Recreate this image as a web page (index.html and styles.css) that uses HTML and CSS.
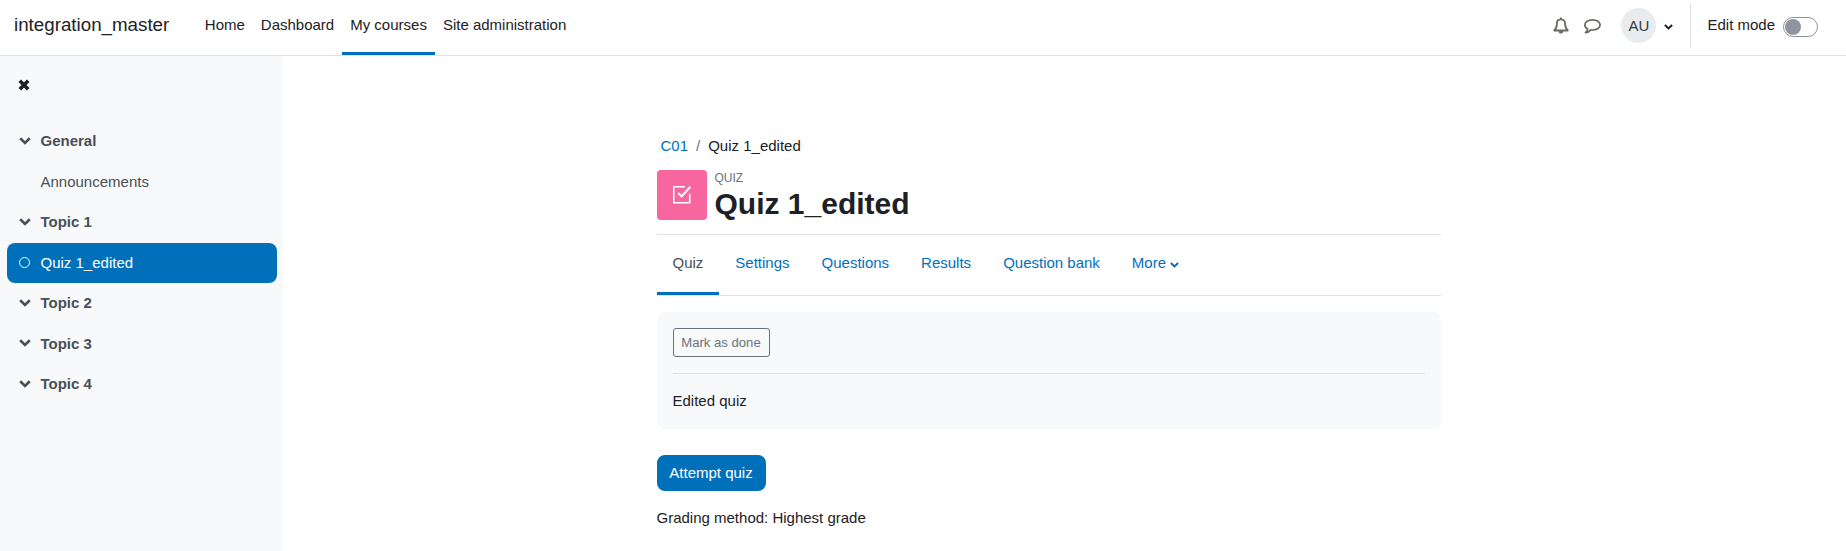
FILE: index.html
```html
<!DOCTYPE html>
<html lang="en">
<head>
    <meta charset="UTF-8">
    <meta name="viewport" content="width=device-width, initial-scale=1.0">
    <title>Quiz 1_edited</title>
    <link rel="stylesheet" href="styles.css">
</head>
<body>
    <!-- Shared icons -->
    <svg class="sprite" width="0" height="0">
        <symbol id="chevron" viewBox="0 0 12 8">
            <path d="M1.2 1.3 L6 5.9 L10.8 1.3" fill="none" stroke="currentColor" stroke-width="2.7"/>
        </symbol>
    </svg>

    <header class="navbar">
        <a class="brand" href="#">integration_master</a>
        <nav class="primary-nav">
            <a href="#">Home</a>
            <a href="#">Dashboard</a>
            <a class="active" href="#">My courses</a>
            <a href="#">Site administration</a>
        </nav>
        <div class="user-nav">
            <svg class="bell" viewBox="0 0 16 17" width="16" height="17">
                <path d="M8 2.3 C5.2 2.3 3.9 4.3 3.9 6.5 C3.9 10 2.9 12 1.2 13.5 H14.8 C13.1 12 12.1 10 12.1 6.5 C12.1 4.3 10.8 2.3 8 2.3 Z M8 0.4 V2.3" fill="none" stroke="currentColor" stroke-width="1.8" stroke-linejoin="round"/>
                <path d="M5.7 14 A2.3 2.6 0 0 0 10.3 14 Z" fill="currentColor"/>
            </svg>
            <svg class="chat" viewBox="0 0 17 15" width="17" height="15">
                <path d="M8.5 0.9 C4.2 0.9 0.9 3 0.9 5.9 C0.9 7.6 1.9 9 3.6 9.9 C3.4 11.4 2.7 12.6 1.5 13.6 C3.7 13.4 5.5 12.4 6.7 10.9 C7.3 11 7.9 11 8.5 11 C12.8 11 16.1 8.8 16.1 5.9 C16.1 3 12.8 0.9 8.5 0.9 Z" fill="none" stroke="currentColor" stroke-width="1.7" stroke-linejoin="round"/>
            </svg>
            <span class="avatar">AU</span>
            <svg class="caret" width="9" height="6"><use href="#chevron"/></svg>
        </div>
        <div class="edit-mode">
            <span>Edit mode</span>
            <span class="switch"></span>
        </div>
    </header>

    <div class="page">
        <aside class="drawer">
            <button class="close" aria-label="Close">
                <svg width="12" height="12" viewBox="0 0 12 12">
                    <path d="M1.8 1.8 L10.2 10.2 M10.2 1.8 L1.8 10.2" stroke="currentColor" stroke-width="3.7"/>
                </svg>
            </button>
            <ul class="course-index">
                <li class="section"><svg class="toggle" width="12" height="8"><use href="#chevron"/></svg>General</li>
                <li class="item">Announcements</li>
                <li class="section"><svg class="toggle" width="12" height="8"><use href="#chevron"/></svg>Topic 1</li>
                <li class="item current"><span class="dot"></span>Quiz 1_edited</li>
                <li class="section"><svg class="toggle" width="12" height="8"><use href="#chevron"/></svg>Topic 2</li>
                <li class="section"><svg class="toggle" width="12" height="8"><use href="#chevron"/></svg>Topic 3</li>
                <li class="section"><svg class="toggle" width="12" height="8"><use href="#chevron"/></svg>Topic 4</li>
            </ul>
        </aside>

        <main class="content">
            <div class="breadcrumb">
                <a href="#">C01</a>
                <span class="divider">/</span>
                <span>Quiz 1_edited</span>
            </div>

            <div class="page-header">
                <div class="activity-icon">
                    <svg width="20" height="20" viewBox="0 0 20 20" fill="none" stroke="#fff" stroke-width="1.6">
                        <path d="M13 1.75 H1.75 V17.75 H17.75 V9"/>
                        <path d="M6.2 8 L9.6 11.4 L18.4 1.8" stroke-width="2"/>
                    </svg>
                </div>
                <div>
                    <div class="activity-type">QUIZ</div>
                    <h1>Quiz 1_edited</h1>
                </div>
            </div>

            <nav class="tabs">
                <a class="active" href="#">Quiz</a>
                <a href="#">Settings</a>
                <a href="#">Questions</a>
                <a href="#">Results</a>
                <a href="#">Question bank</a>
                <a href="#">More<svg class="caret" width="9" height="6"><use href="#chevron"/></svg></a>
            </nav>

            <div class="activity-info">
                <button class="btn-outline">Mark as done</button>
                <hr>
                <p>Edited quiz</p>
            </div>

            <button class="btn-primary">Attempt quiz</button>
            <p class="grading">Grading method: Highest grade</p>
        </main>
    </div>
</body>
</html>
```

FILE: styles.css
```css
* {
    box-sizing: border-box;
}
body {
    margin: 0;
    height: 551px;
    overflow: hidden;
    font-family: "Liberation Sans", Arial, sans-serif;
    font-size: 15px;
    line-height: 22.5px;
    color: #1d2125;
    background-color: #fff;
}
a {
    color: #0070bb;
    text-decoration: none;
}
p, h1, ul {
    margin: 0;
    padding: 0;
}
button {
    font-family: inherit;
    cursor: pointer;
}
.sprite {
    display: none;
}

/* Top bar */
.navbar {
    display: flex;
    height: 56px;
    padding: 0 28px 0 14px;
    border-bottom: 1px solid #dee2e6;
}
.brand {
    padding-top: 11px;
    margin-right: 27.5px;
    font-size: 18.75px;
    line-height: 28px;
    color: #1d2125;
}
.primary-nav {
    display: flex;
}
.primary-nav a {
    padding: 13.5px 8px 0;
    color: #1d2125;
    border-bottom: 3px solid transparent;
}
.primary-nav a.active {
    border-bottom-color: #0070bb;
}
.user-nav {
    display: flex;
    align-items: center;
    height: 51px;
    margin-left: auto;
    color: #6a6862;
}
.chat {
    margin: 1px 20px 0 15px;
}
.avatar {
    width: 35px;
    height: 35px;
    border-radius: 50%;
    background-color: #e9ecef;
    color: #343a40;
    line-height: 35px;
    text-align: center;
}
.user-nav .caret {
    margin: 2px 17px 0 8px;
    color: #1d2125;
}
.edit-mode {
    display: flex;
    align-items: center;
    height: 45px;
    margin-top: 3px;
    padding-left: 16px;
    border-left: 1px solid #dee2e6;
}
.edit-mode span:first-child {
    margin-top: -1px;
}
.switch {
    display: flex;
    align-items: center;
    width: 35px;
    height: 20px;
    margin: 3px 0 0 8px;
    padding-left: 1px;
    border: 1px solid #8f959e;
    border-radius: 10px;
}
.switch::before {
    content: "";
    width: 16px;
    height: 16px;
    border-radius: 50%;
    background-color: #8f959e;
}

/* Course index */
.page {
    display: flex;
    height: 495px;
}
.drawer {
    flex: none;
    width: 283px;
    padding: 22px 6px 0 7px;
    background-color: #f8f9fb;
}
.close {
    display: block;
    height: 14px;
    margin: 0 0 29px 11px;
    padding: 0;
    border: none;
    background: none;
    color: #1d2125;
}
.close svg {
    display: block;
}
.course-index {
    list-style: none;
}
.course-index li {
    display: flex;
    align-items: center;
    height: 40.5px;
    padding-left: 33.5px;
    color: #495057;
}
.course-index .section {
    padding-left: 11.5px;
    font-weight: bold;
}
.toggle {
    margin: -1px 10px 0 0;
}
.course-index .current {
    padding-left: 12px;
    border-radius: 8px;
    background-color: #0070bb;
    color: #fff;
}
.dot {
    width: 11px;
    height: 11px;
    margin-right: 10.5px;
    border: 1px solid #fff;
    border-radius: 50%;
}

/* Main column */
.content {
    width: 784px;
    margin-left: 373.5px;
    padding-top: 78.5px;
}
.breadcrumb {
    display: flex;
    gap: 8px;
    padding-left: 4px;
}
.divider {
    color: #6a737b;
}
.page-header {
    display: flex;
    gap: 8px;
    height: 64px;
    margin-top: 13px;
}
.activity-icon {
    display: flex;
    align-items: center;
    justify-content: center;
    width: 50px;
    height: 50px;
    border-radius: 4px;
    background-color: #f7669f;
}
.activity-type {
    padding-top: 1px;
    font-size: 12px;
    line-height: 14px;
    color: #6a737b;
}
h1 {
    font-size: 30px;
    line-height: 38px;
}
.tabs {
    display: flex;
    height: 62px;
    border-top: 1px solid #dee2e6;
    border-bottom: 1px solid #dee2e6;
}
.tabs a {
    padding: 16.5px 16px 0;
    border-bottom: 3px solid transparent;
}
.tabs a.active {
    color: #495057;
    border-bottom-color: #0070bb;
}
.tabs .caret {
    margin-left: 4px;
}
.activity-info {
    height: 117px;
    margin-top: 16px;
    padding: 16px;
    border-radius: 8px;
    background-color: #f8f9fb;
}
.btn-outline {
    display: block;
    width: 97px;
    height: 29px;
    padding: 0;
    border: 1px solid #6a737b;
    border-radius: 3px;
    background: none;
    font-size: 13.125px;
    color: #6a737b;
}
hr {
    margin: 16px 0;
    border: none;
    border-top: 1px solid #dee2e6;
}
.btn-primary {
    display: block;
    width: 109px;
    height: 36px;
    margin: 26px 0 15.5px;
    padding: 0 0 1px;
    border: none;
    border-radius: 8px;
    background-color: #0070bb;
    font-size: 15px;
    color: #fff;
}
```
